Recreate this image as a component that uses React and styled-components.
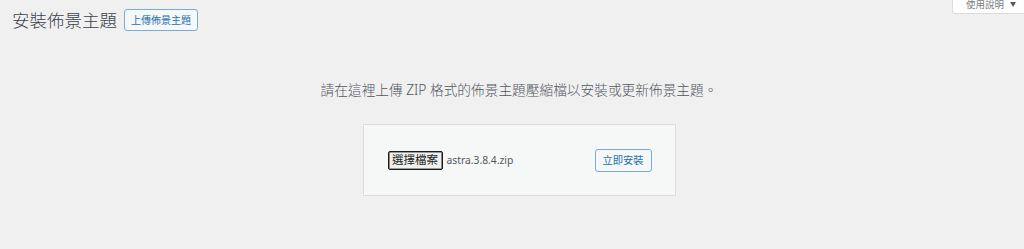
import React from "react";
import styled, { createGlobalStyle } from "styled-components";

const Global = createGlobalStyle`
  html, body {
    margin: 0;
    padding: 0;
    background: #f0f0f1;
    overflow: hidden;
  }
  body {
    font-family: "Noto Sans", "Noto Sans CJK TC", sans-serif;
    color: #3c434a;
  }
`;

const Page = styled.div`
  width: 1024px;
  height: 249px;
  box-sizing: border-box;
  padding-left: 12px;
`;

const HelpTab = styled.button`
  float: right;
  margin-right: -4px;
  height: 14px;
  width: 76px;
  box-sizing: border-box;
  display: flex;
  align-items: flex-start;
  gap: 6px;
  padding: 0 0 0 13px;
  border: 1px solid #dcdcde;
  border-top: none;
  border-radius: 0 0 3px 3px;
  background: #fff;
  font-family: "Noto Sans CJK TC", sans-serif;
  font-size: 9.5px;
  line-height: 10px;
  color: #787c82;
  cursor: pointer;
`;

const HelpText = styled.span`
  margin-top: -1px;
`;

const Caret = styled.span`
  font-size: 6px;
  line-height: 10px;
  margin-top: -1px;
  color: #50575e;
`;

const HeaderRow = styled.div`
  display: flex;
  align-items: center;
  gap: 7px;
  padding-top: 9px;
  height: 22px;
`;

const Title = styled.h1`
  margin: 0;
  font-family: "Noto Sans CJK TC", sans-serif;
  font-weight: 300;
  font-size: 17.5px;
  line-height: 22px;
  color: #3c434a;
`;

const OutlineButton = styled.button`
  box-sizing: border-box;
  height: ${(p) => p.$h}px;
  width: ${(p) => p.$w}px;
  padding: 0;
  border: 1px solid #7aabd6;
  border-radius: 3px;
  background: #f6f7f7;
  color: #2271b1;
  font-family: "Noto Sans CJK TC", sans-serif;
  font-size: ${(p) => p.$fs}px;
  line-height: 1;
  cursor: pointer;
`;

const Main = styled.div`
  padding-left: 2px;
  text-align: center;
`;

const Description = styled.p`
  margin: 49px 0 0;
  font-family: "Noto Sans", "Noto Sans CJK TC", sans-serif;
  font-weight: 300;
  font-size: 13.7px;
  line-height: 20px;
  color: #50575e;
`;

const UploadForm = styled.form`
  display: inline-flex;
  justify-content: space-between;
  align-items: center;
  box-sizing: border-box;
  width: 313px;
  height: 72px;
  margin-top: 24px;
  padding: 0 23px 0 24px;
  background: #f6f7f7;
  border: 1px solid #dcdcde;
`;

const FileGroup = styled.div`
  display: flex;
  align-items: center;
  gap: 4px;
`;

const FileButton = styled.span`
  box-sizing: border-box;
  width: 55px;
  height: 19px;
  display: flex;
  align-items: center;
  justify-content: center;
  border: 1px solid #1a1a1a;
  box-shadow: inset 0 0 0 0.6px #444;
  border-radius: 2px;
  background: #efefef;
  color: #222;
  font-family: "Noto Sans CJK TC", sans-serif;
  font-size: 11.5px;
  line-height: 1;
`;

const FileName = styled.span`
  font-family: "Noto Sans", sans-serif;
  font-size: 10.3px;
  color: #50575e;
`;

export default function App() {
  return (
    <>
      <Global />
      <Page>
        <HelpTab type="button">
          <HelpText>使用說明</HelpText>
          <Caret>▼</Caret>
        </HelpTab>
        <HeaderRow>
          <Title>安裝佈景主題</Title>
          <OutlineButton type="button" $w={74} $h={22} $fs={10}>
            上傳佈景主題
          </OutlineButton>
        </HeaderRow>
        <Main>
          <Description>
            請在這裡上傳 ZIP 格式的佈景主題壓縮檔以安裝或更新佈景主題。
          </Description>
          <UploadForm onSubmit={(e) => e.preventDefault()}>
            <FileGroup>
              <FileButton>選擇檔案</FileButton>
              <FileName>astra.3.8.4.zip</FileName>
            </FileGroup>
            <OutlineButton type="submit" $w={57} $h={23} $fs={10.3}>
              立即安裝
            </OutlineButton>
          </UploadForm>
        </Main>
      </Page>
    </>
  );
}
